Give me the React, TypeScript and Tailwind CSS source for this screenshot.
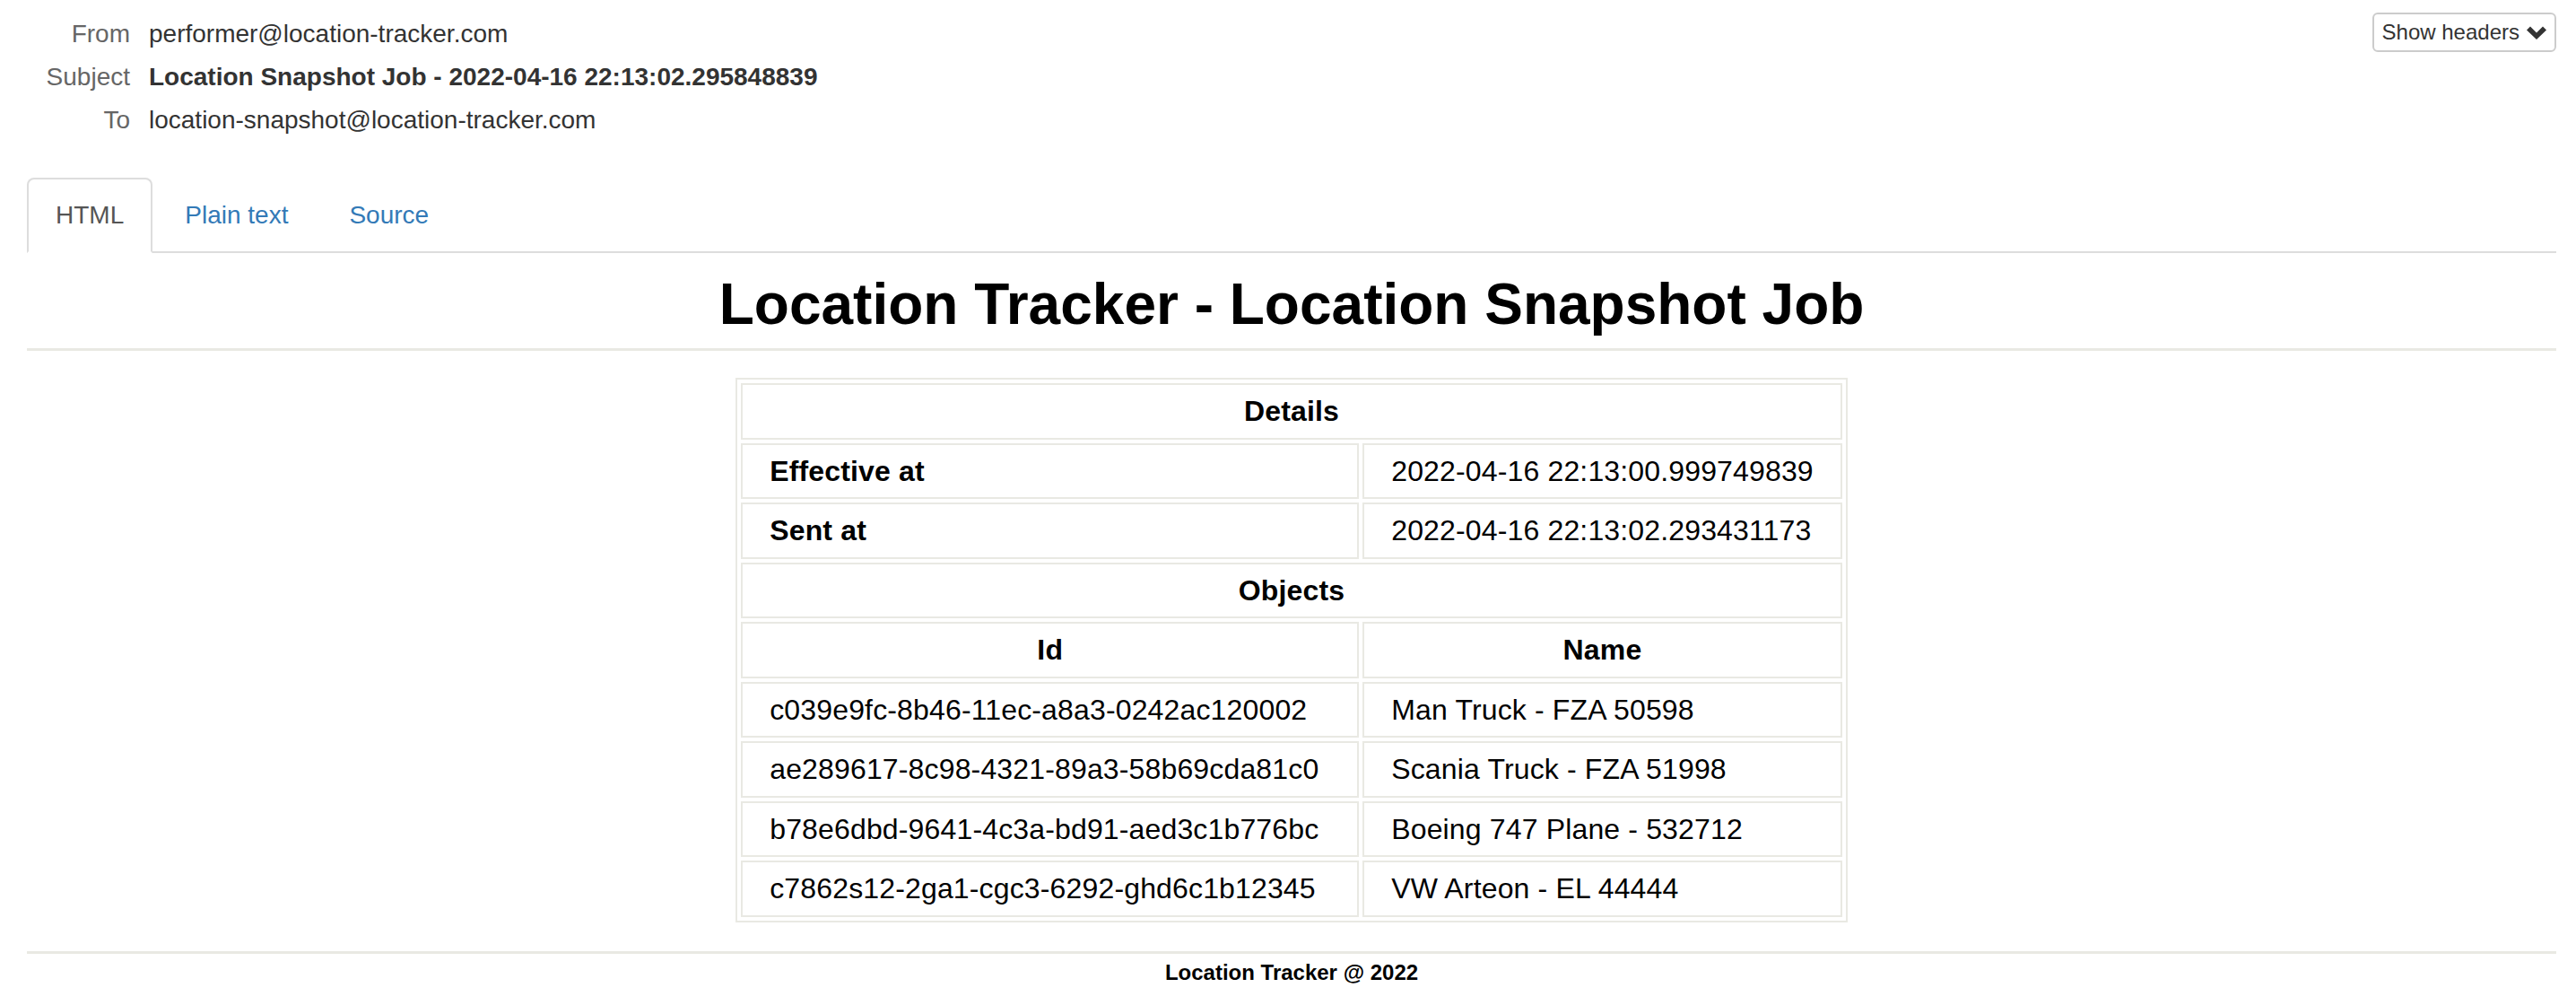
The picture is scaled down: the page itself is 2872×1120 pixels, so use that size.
import React from 'react';

const headers = [
  { label: 'From', value: 'performer@location-tracker.com', bold: false },
  { label: 'Subject', value: 'Location Snapshot Job - 2022-04-16 22:13:02.295848839', bold: true },
  { label: 'To', value: 'location-snapshot@location-tracker.com', bold: false },
];

const objects = [
  ['c039e9fc-8b46-11ec-a8a3-0242ac120002', 'Man Truck - FZA 50598'],
  ['ae289617-8c98-4321-89a3-58b69cda81c0', 'Scania Truck - FZA 51998'],
  ['b78e6dbd-9641-4c3a-bd91-aed3c1b776bc', 'Boeing 747 Plane - 532712'],
  ['c7862s12-2ga1-cgc3-6292-ghd6c1b12345', 'VW Arteon - EL 44444'],
];

const cell = 'whitespace-nowrap border-2 border-[#e9e9e3] px-[30px] py-[10px] leading-[38.5px]';
const left = `${cell} w-[689px]`;
const right = `${cell} w-[533px]`;

function Chevron() {
  return (
    <svg width="22" height="15" viewBox="0 0 22 15" aria-hidden="true">
      <path d="M0 4.5 L4 0.5 L11 7.5 L18 0.5 L22 4.5 L11 15 Z" fill="#333" />
    </svg>
  );
}

export default function App() {
  return (
    <div className="min-h-screen bg-white pl-[30px] pr-[22px] font-['Liberation_Sans',Arial,sans-serif] text-[#333]">
      {/* message headers */}
      <div className="flex items-start justify-between pt-[14px]">
        <div>
          {headers.map((h) => (
            <div key={h.label} className="flex py-[4px] text-[28px] leading-[40px]">
              <div className="w-[115px] text-right text-[#666]">{h.label}</div>
              <div className={`ml-[21px] ${h.bold ? 'font-bold' : ''}`}>{h.value}</div>
            </div>
          ))}
        </div>
        <button className="flex items-center gap-[8px] rounded-[6px] border-2 border-[#ccc] bg-white px-[9px] py-[2px] text-[24px] leading-[36px] text-[#333]">
          Show headers
          <Chevron />
        </button>
      </div>

      {/* tabs */}
      <ul className="mt-[40px] flex border-b-2 border-[#ddd] text-[28px] leading-[40px]">
        <li className="-mb-[2px] mr-[4px]">
          <span className="block rounded-t-[8px] border-2 border-[#ddd] border-b-transparent bg-white px-[30px] py-[20px] text-[#555]">
            HTML
          </span>
        </li>
        <li className="-mb-[2px] mr-[4px]">
          <span className="block border-2 border-transparent px-[30px] py-[20px] text-[#337ab7]">Plain text</span>
        </li>
        <li className="-mb-[2px] mr-[4px]">
          <span className="block border-2 border-transparent px-[30px] py-[20px] text-[#337ab7]">Source</span>
        </li>
      </ul>

      {/* html body */}
      <div className="text-black">
        <h1 className="mt-[20px] text-center text-[64px] font-bold leading-[74px]">
          Location Tracker - Location Snapshot Job
        </h1>
        <div className="mt-[12px] h-[3px] bg-[#e9e9e3]" />

        <table className="mx-auto mt-[30px] border-separate border-spacing-[4px] border-2 border-[#e9e9e3] text-[32px] tracking-[0.15px]">
          <tbody>
            <tr>
              <th colSpan={2} className={`${cell} text-center`}>Details</th>
            </tr>
            <tr>
              <th className={`${left} text-left`}>Effective at</th>
              <td className={right}>2022-04-16 22:13:00.999749839</td>
            </tr>
            <tr>
              <th className={`${left} text-left`}>Sent at</th>
              <td className={right}>2022-04-16 22:13:02.293431173</td>
            </tr>
            <tr>
              <th colSpan={2} className={`${cell} text-center`}>Objects</th>
            </tr>
            <tr>
              <th className={`${left} text-center`}>Id</th>
              <th className={`${right} text-center`}>Name</th>
            </tr>
            {objects.map(([id, name]) => (
              <tr key={id}>
                <td className={left}>{id}</td>
                <td className={right}>{name}</td>
              </tr>
            ))}
          </tbody>
        </table>

        <div className="mt-[32px] h-[3px] bg-[#e9e9e3]" />
        <div className="mt-[7px] pb-[20px] text-center text-[24px] font-bold leading-[28px]">
          Location Tracker @ 2022
        </div>
      </div>
    </div>
  );
}
